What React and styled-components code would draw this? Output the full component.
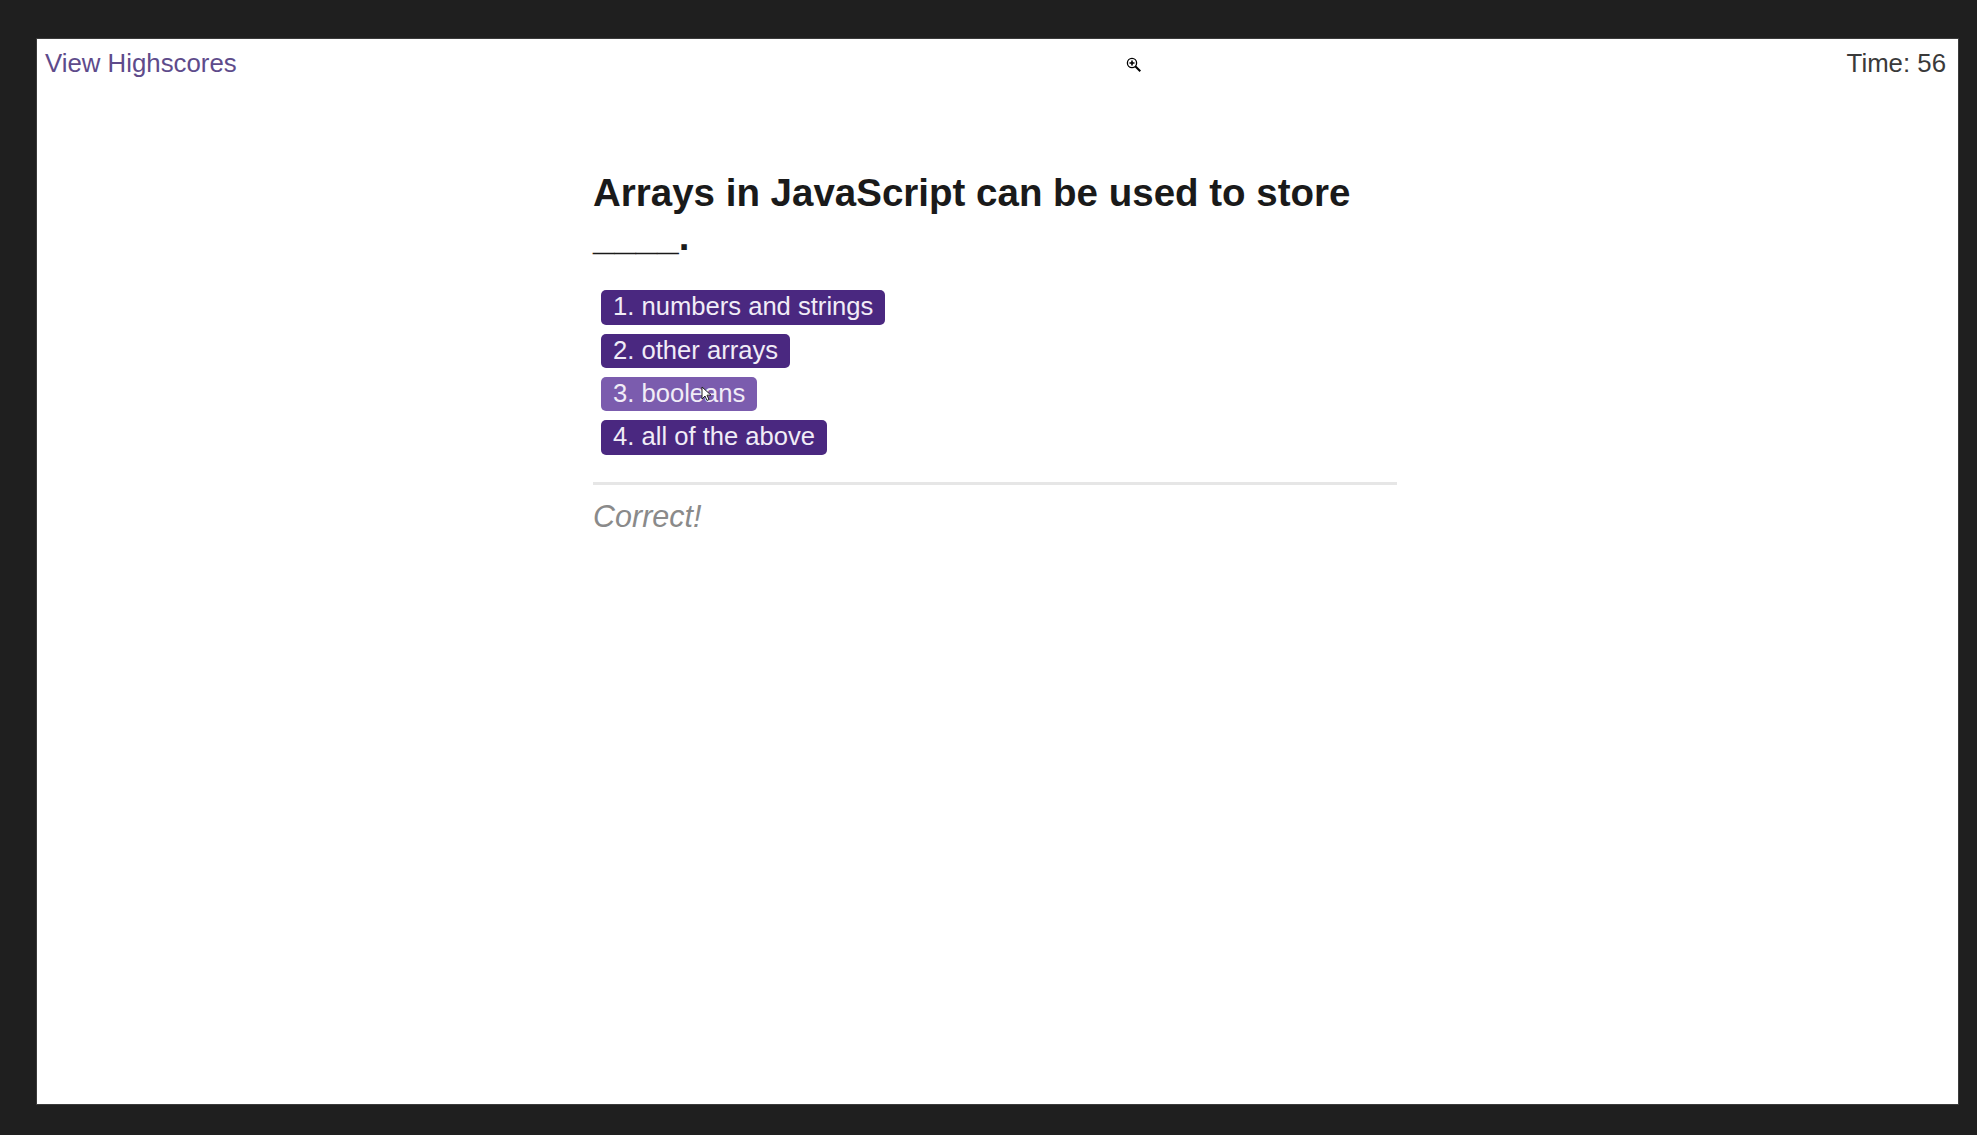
import React from 'react';
import styled, { createGlobalStyle } from 'styled-components';

const GlobalStyle = createGlobalStyle`
  html, body {
    margin: 0;
    padding: 0;
    background: #1f1f1f;
  }
  body {
    font-family: "Liberation Sans", Arial, Helvetica, sans-serif;
  }
`;

const Frame = styled.div`
  position: relative;
  box-sizing: border-box;
  margin: 38px 18px 30px 36px;
  height: 1067px;
  background: #ffffff;
  border: 1px solid #3b3b3b;
`;

const TopBar = styled.header`
  display: flex;
  justify-content: space-between;
  align-items: center;
  padding: 10px 12px 0 8px;
  font-size: 25.8px;
  line-height: 1.15;
`;

const ScoresLink = styled.a`
  color: #5e4b8b;
  text-decoration: none;
`;

const Timer = styled.span`
  color: #3a3a3a;
`;

const Quiz = styled.main`
  width: 804px;
  margin: 92px 0 0 556px;
`;

const Question = styled.h2`
  margin: 0;
  font-size: 38.5px;
  font-weight: 700;
  line-height: 1.15;
  color: #1a1a1a;
`;

const Choices = styled.div`
  display: flex;
  flex-direction: column;
  align-items: flex-start;
  gap: 9px;
  margin: 31px 0 0 8px;
`;

const Choice = styled.button`
  font-family: inherit;
  font-size: 25.6px;
  line-height: 1.15;
  padding: 2px 12px 3px 12px;
  border: none;
  border-radius: 5px;
  color: #f1ecf7;
  background: ${(p) => (p.hover ? '#7b5cae' : '#4a2880')};
  cursor: pointer;
`;

const Rule = styled.hr`
  margin: 27px 0 0 0;
  height: 3px;
  border: none;
  background: #e6e6e6;
`;

const Feedback = styled.p`
  margin: 14px 0 0 0;
  font-size: 30.5px;
  font-style: italic;
  line-height: 1.15;
  color: #8a8a8a;
`;

const Cursor = styled.svg`
  position: absolute;
  left: ${(p) => p.x}px;
  top: ${(p) => p.y}px;
  pointer-events: none;
`;

const choices = ['1. numbers and strings', '2. other arrays', '3. booleans', '4. all of the above'];

export default function App() {
  return (
    <>
      <GlobalStyle />
      <Frame>
        <TopBar>
          <ScoresLink href="#">View Highscores</ScoresLink>
          <Timer>Time: 56</Timer>
        </TopBar>

        <Quiz>
          <Question>Arrays in JavaScript can be used to store ____.</Question>
          <Choices>
            {choices.map((c, i) => (
              <Choice key={c} hover={i === 2}>
                {c}
              </Choice>
            ))}
          </Choices>
          <Rule />
          <Feedback>Correct!</Feedback>
        </Quiz>

        {/* zoom cursor */}
        <Cursor x={1089} y={18} width="16" height="16" viewBox="0 0 16 16">
          <circle cx="6" cy="6" r="4.6" fill="#fff" stroke="#000" strokeWidth="1.3" />
          <path d="M6 3.5v5M3.5 6h5" stroke="#000" strokeWidth="1.6" />
          <path d="M9.3 9.3l5 5" stroke="#000" strokeWidth="2" />
        </Cursor>

        {/* mouse pointer */}
        <Cursor x={664} y={347} width="12" height="16" viewBox="0 0 12 16">
          <path d="M1 1v12l3-3 2 4.5 2-1-2-4.3h4z" fill="#fff" stroke="#222" strokeWidth="1" />
        </Cursor>
      </Frame>
    </>
  );
}
